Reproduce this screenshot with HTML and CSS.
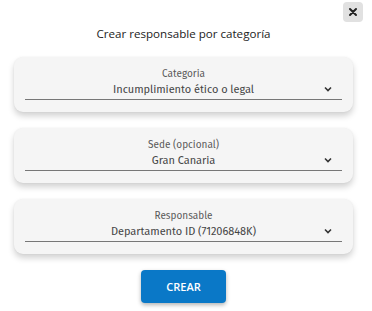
FILE: index.html
```html
<!DOCTYPE html>
<html lang="es">
<head>
<meta charset="utf-8">
<link rel="stylesheet" href="styles.css">
</head>
<body>
<div class="dialog">
  <button class="close" aria-label="Cerrar">
    <svg width="10" height="10" viewBox="0 0 10 10"><path d="M2 2L8 8M8 2L2 8" stroke="#222" stroke-width="2" stroke-linecap="round"/></svg>
  </button>
  <h1 class="title">Crear responsable por categoría</h1>
  <div class="fields">
    <div class="field">
      <div class="label">Categoria</div>
      <div class="select"><span class="value">Incumplimiento ético o legal</span><svg class="chev" width="8" height="6" viewBox="0 0 8 6"><path d="M1 1.5L4 4.5L7 1.5" fill="none" stroke="#333" stroke-width="1.6"/></svg></div>
    </div>
    <div class="field">
      <div class="label">Sede (opcional)</div>
      <div class="select"><span class="value">Gran Canaria</span><svg class="chev" width="8" height="6" viewBox="0 0 8 6"><path d="M1 1.5L4 4.5L7 1.5" fill="none" stroke="#333" stroke-width="1.6"/></svg></div>
    </div>
    <div class="field">
      <div class="label">Responsable</div>
      <div class="select"><span class="value">Departamento ID (71206848K)</span><svg class="chev" width="8" height="6" viewBox="0 0 8 6"><path d="M1 1.5L4 4.5L7 1.5" fill="none" stroke="#333" stroke-width="1.6"/></svg></div>
    </div>
  </div>
  <div class="actions">
    <button class="create">CREAR</button>
  </div>
</div>
</body>
</html>
```
FILE: styles.css
```css
html, body {
  margin: 0;
  padding: 0;
  background: #ffffff;
}
body {
  width: 372px;
  height: 311px;
  overflow: hidden;
}
.dialog {
  position: relative;
  padding: 25px 19px 0 14px;
  display: flex;
  flex-direction: column;
}
.close {
  position: absolute;
  top: 2px;
  left: 343px;
  width: 20px;
  height: 20px;
  border: none;
  border-radius: 4px;
  background: #e1e1e1;
  padding: 0;
  display: flex;
  align-items: center;
  justify-content: center;
}
.title {
  margin: 0 0 15px 0;
  font-family: "Open Sans", sans-serif;
  font-weight: 400;
  font-size: 11.6px;
  line-height: 17px;
  color: #222;
  text-align: center;
}
.fields {
  display: flex;
  flex-direction: column;
  gap: 16px;
}
.field {
  height: 55px;
  box-sizing: border-box;
  background: #f5f5f5;
  border-radius: 9px;
  box-shadow: 0 4px 6px rgba(0,0,0,0.18), 0 0 2px rgba(0,0,0,0.06);
  padding: 11px 11px 0 11px;
  font-family: "Fira Sans", "Roboto", sans-serif;
  text-align: center;
}
.label {
  font-size: 10px;
  line-height: 12px;
  color: #5a5a5a;
}
.select {
  position: relative;
  border-bottom: 1px solid #777;
  height: 19px;
  display: flex;
  align-items: center;
  justify-content: center;
}
.value {
  font-size: 11px;
  font-weight: 400;
  letter-spacing: -0.05px;
  color: #454545;
}
.chev {
  position: absolute;
  right: 10px;
  top: 6px;
}
.actions {
  display: flex;
  justify-content: center;
  padding-top: 16px;
}
.create {
  width: 85px;
  height: 33px;
  border: none;
  border-radius: 4px;
  background: #0a78c7;
  color: #fff;
  font-family: "Open Sans", sans-serif;
  font-size: 11px;
  font-weight: 600;
  box-shadow: 0 2px 4px rgba(0,0,0,0.3);
}
```
